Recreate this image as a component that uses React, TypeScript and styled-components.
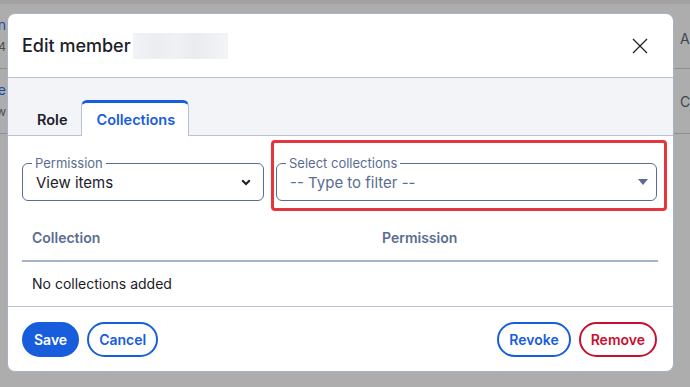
import styled, { createGlobalStyle } from "styled-components";

const GlobalStyle = createGlobalStyle`
  html, body {
    margin: 0;
    padding: 0;
    background: #adadad;
    font-family: Inter, "Noto Sans", sans-serif;
    overflow: hidden;
  }
`;

const Page = styled.div`
  position: relative;
  width: 690px;
  height: 387px;
  background: #adadad;
  border-top: 4px solid #a2a2a2;
  box-sizing: border-box;
`;

const BackRow = styled.div`
  display: flex;
  justify-content: space-between;
  height: 64px;
  border-bottom: 1px solid #8e8e8e;
`;

const BackCell = styled.div`
  width: 6px;
  overflow: hidden;
  display: flex;
  flex-direction: column;
  align-items: flex-end;
  justify-content: center;
  gap: 6px;
  font-size: 14px;
  line-height: 16px;
  white-space: nowrap;
`;

const BackRight = styled.div<{ $top?: boolean }>`
  width: 10px;
  overflow: hidden;
  display: flex;
  align-items: ${(p) => (p.$top ? "flex-start" : "center")};
  padding-top: ${(p) => (p.$top ? "26px" : "0")};
  font-size: 14px;
  color: #3f4450;
  white-space: nowrap;
`;

const BackLink = styled.span`
  color: #1f4aa0;
`;

const BackMuted = styled.span`
  color: #4a4d55;
  font-size: 12px;
`;

const Modal = styled.div`
  position: absolute;
  top: 9px;
  left: 7px;
  width: 667px;
  height: 359px;
  box-sizing: border-box;
  background: #fff;
  border: 1px solid #a8b3c9;
  border-radius: 8px;
  display: flex;
  flex-direction: column;
  overflow: hidden;
`;

const Header = styled.div`
  height: 63px;
  display: flex;
  align-items: center;
  justify-content: space-between;
  padding: 0 24px 0 14px;
  border-bottom: 1px solid #b9c2d3;
  flex-shrink: 0;
`;

const Title = styled.h1`
  margin: 0;
  font-size: 18px;
  font-weight: 500;
  color: #1b2029;
  display: flex;
  align-items: center;
`;

const Blurred = styled.span`
  display: inline-block;
  width: 95px;
  height: 26px;
  margin-left: 2px;
  background: linear-gradient(90deg, #f2f3f6 0%, #ebedf1 25%, #f0f1f4 45%, #e9ebef 65%, #f3f4f6 100%);
`;

const CloseButton = styled.button`
  border: none;
  background: transparent;
  padding: 0;
  width: 18px;
  height: 18px;
  display: flex;
  align-items: center;
  justify-content: center;
  cursor: pointer;
`;

const TabBar = styled.div`
  height: 57px;
  background: #f3f4f8;
  display: flex;
  align-items: flex-end;
  padding-left: 14px;
  border-bottom: 1px solid #b9c2d3;
  flex-shrink: 0;
`;

const Tab = styled.div<{ $active?: boolean }>`
  box-sizing: border-box;
  height: 36px;
  padding: 0 13px 0 14px;
  display: flex;
  align-items: center;
  font-size: 14.5px;
  font-weight: 600;
  color: ${(p) => (p.$active ? "#175ddc" : "#1b2029")};
  background: ${(p) => (p.$active ? "#fff" : "transparent")};
  border: ${(p) => (p.$active ? "1px solid #b9c2d3" : "1px solid transparent")};
  border-top: ${(p) => (p.$active ? "3px solid #175ddc" : "3px solid transparent")};
  border-bottom: none;
  border-radius: 6px 6px 0 0;
  margin-bottom: -1px;
`;

const Body = styled.div`
  padding: 20px 15px 0 14px;
  flex: 1;
`;

const Fields = styled.div`
  display: flex;
  gap: 12px;
`;

const FieldWrap = styled.div<{ $grow?: boolean; $highlight?: boolean }>`
  position: relative;
  width: ${(p) => (p.$grow ? "381px" : "242px")};
  &::after {
    content: "";
    display: ${(p) => (p.$highlight ? "block" : "none")};
    position: absolute;
    top: -16px;
    left: -5px;
    right: -10px;
    bottom: -10px;
    border: 3px solid #e4363c;
    border-radius: 4px;
    pointer-events: none;
  }
`;

const Fieldset = styled.fieldset<{ $padRight?: number }>`
  margin: 0;
  height: 45px;
  box-sizing: border-box;
  border: 1px solid #5a6d91;
  border-radius: 6px;
  padding: 0 ${(p) => p.$padRight ?? 12}px 0 13px;
  display: flex;
  align-items: center;
  justify-content: space-between;
`;

const Legend = styled.legend`
  font-size: 13px;
  color: #5a6d91;
  padding: 0 3px;
  margin-left: -4px;
  line-height: 14px;
`;

const Value = styled.span<{ $placeholder?: boolean }>`
  font-size: 15px;
  color: ${(p) => (p.$placeholder ? "#5a6d91" : "#1b2029")};
  margin-top: -6px;
`;

const IconBox = styled.span`
  display: flex;
  margin-top: -6px;
`;

const Table = styled.table`
  width: 100%;
  margin-top: 14px;
  border-collapse: collapse;
`;

const Th = styled.th<{ $w?: string }>`
  text-align: left;
  font-size: 14px;
  font-weight: 600;
  color: #5a6d91;
  padding: 0 10px;
  height: 45px;
  width: ${(p) => p.$w || "auto"};
  border-bottom: 2px solid #a6b2ca;
`;

const Td = styled.td`
  font-size: 14px;
  color: #1b2029;
  padding: 0 10px;
  height: 43px;
`;

const Footer = styled.div`
  height: 65px;
  box-sizing: border-box;
  border-top: 1px solid #b9c2d3;
  display: flex;
  align-items: center;
  justify-content: space-between;
  padding: 0 16px 0 14px;
  flex-shrink: 0;
`;

const ButtonGroup = styled.div`
  display: flex;
  gap: 8px;
`;

const Button = styled.button<{ $variant: "primary" | "secondary" | "danger" }>`
  height: 35px;
  box-sizing: border-box;
  border-radius: 18px;
  padding: 0 10px;
  font-family: Inter, "Noto Sans", sans-serif;
  font-size: 14px;
  font-weight: 600;
  cursor: pointer;
  background: ${(p) => (p.$variant === "primary" ? "#175ddc" : "#fff")};
  color: ${(p) =>
    p.$variant === "primary" ? "#fff" : p.$variant === "danger" ? "#c8102e" : "#175ddc"};
  border: 2px solid ${(p) => (p.$variant === "danger" ? "#c8102e" : "#175ddc")};
`;

function App() {
  return (
    <>
      <GlobalStyle />
      <Page>
        <BackRow>
          <BackCell>
            <BackLink>Jonathan</BackLink>
            <BackMuted>1234</BackMuted>
          </BackCell>
          <BackRight $top>Admin</BackRight>
        </BackRow>
        <BackRow>
          <BackCell>
            <BackLink>Name</BackLink>
            <BackMuted>new</BackMuted>
          </BackCell>
          <BackRight>Custom</BackRight>
        </BackRow>

        <Modal>
          <Header>
            <Title>
              Edit member <Blurred />
            </Title>
            <CloseButton aria-label="Close">
              <svg width="16" height="16" viewBox="0 0 16 16">
                <path d="M1 1L15 15M15 1L1 15" stroke="#1b2029" strokeWidth="1.3" fill="none" />
              </svg>
            </CloseButton>
          </Header>
          <TabBar>
            <Tab>Role</Tab>
            <Tab $active>Collections</Tab>
          </TabBar>
          <Body>
            <Fields>
              <FieldWrap>
                <Fieldset>
                  <Legend>Permission</Legend>
                  <Value>View items</Value>
                  <IconBox>
                    <svg width="10" height="7" viewBox="0 0 10 7">
                      <path d="M1.2 1.2L5 5L8.8 1.2" stroke="#1b2029" strokeWidth="2" fill="none" />
                    </svg>
                  </IconBox>
                </Fieldset>
              </FieldWrap>
              <FieldWrap $grow $highlight>
                <Fieldset $padRight={8}>
                  <Legend>Select collections</Legend>
                  <Value $placeholder>-- Type to filter --</Value>
                  <IconBox>
                    <svg width="10" height="6" viewBox="0 0 10 6">
                      <path d="M0 0H10L5 6Z" fill="#5a6d91" />
                    </svg>
                  </IconBox>
                </Fieldset>
              </FieldWrap>
            </Fields>
            <Table>
              <thead>
                <tr>
                  <Th $w="330px">Collection</Th>
                  <Th>Permission</Th>
                </tr>
              </thead>
              <tbody>
                <tr>
                  <Td colSpan={2}>No collections added</Td>
                </tr>
              </tbody>
            </Table>
          </Body>
          <Footer>
            <ButtonGroup>
              <Button $variant="primary">Save</Button>
              <Button $variant="secondary">Cancel</Button>
            </ButtonGroup>
            <ButtonGroup>
              <Button $variant="secondary">Revoke</Button>
              <Button $variant="danger">Remove</Button>
            </ButtonGroup>
          </Footer>
        </Modal>
      </Page>
    </>
  );
}

export default App;
